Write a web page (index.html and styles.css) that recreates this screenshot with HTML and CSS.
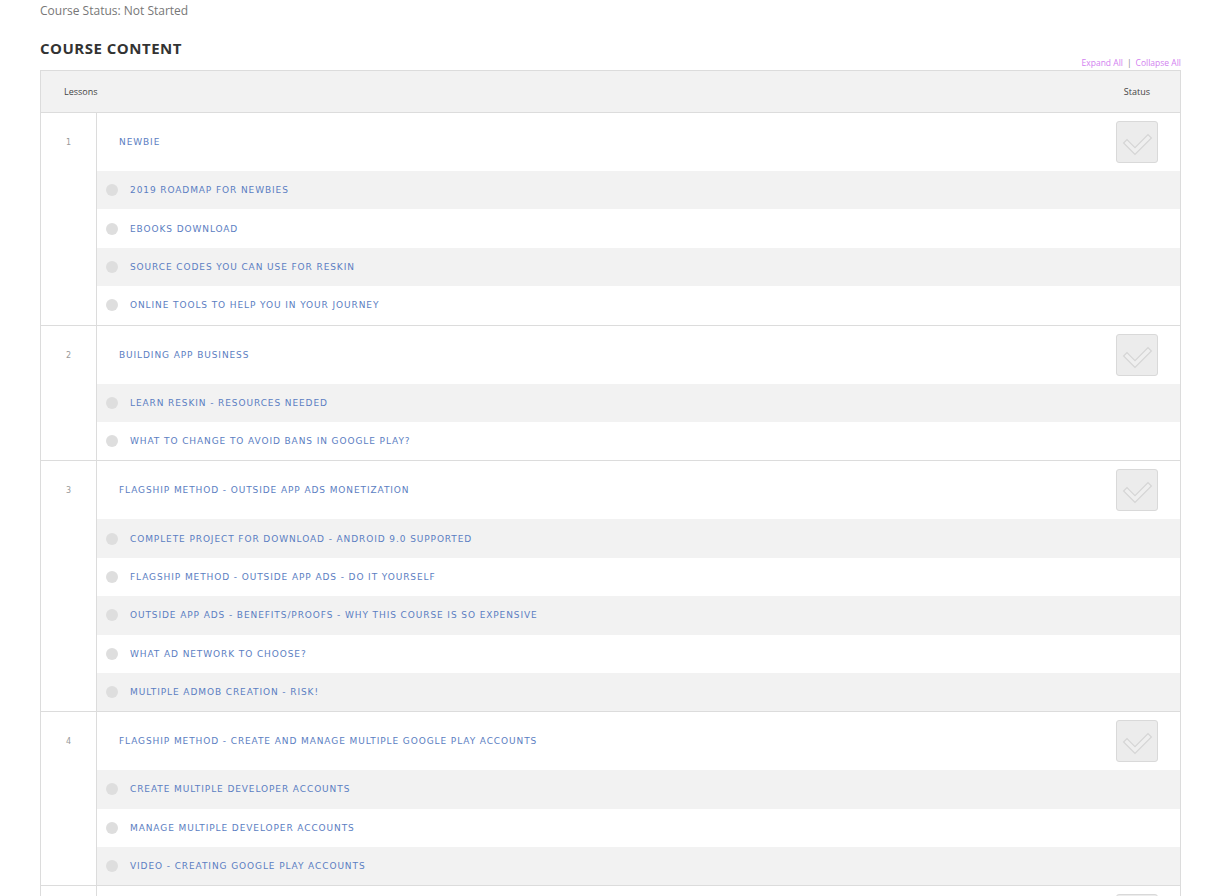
FILE: index.html
```html
<!DOCTYPE html>
<html lang="en">
<head>
<meta charset="utf-8">
<title>Course Content</title>
<link rel="stylesheet" href="styles.css">
</head>
<body>
<div class="page">
  <p class="course-status">Course Status: Not Started</p>
  <h2 class="section-title">COURSE CONTENT</h2>
  <div class="toggles"><a href="#">Expand All</a><span class="sep">|</span><a href="#">Collapse All</a></div>

  <div class="lessons">
    <div class="lessons-head">
      <span class="head-lessons">Lessons</span>
      <span class="head-status">Status</span>
    </div>

    <div class="lesson">
      <div class="lesson-num">1</div>
      <div class="lesson-body">
        <div class="lesson-title">
          <a href="#">NEWBIE</a>
          <span class="status-box"><svg viewBox="0 0 42 42" width="42" height="42"><polyline points="11,22 19,30 32,17" class="chk-out"/><polyline points="11,22 19,30 32,17" class="chk-in"/></svg></span>
        </div>
        <div class="topic"><span class="dot"></span><a href="#">2019 ROADMAP FOR NEWBIES</a></div>
        <div class="topic"><span class="dot"></span><a href="#">EBOOKS DOWNLOAD</a></div>
        <div class="topic"><span class="dot"></span><a href="#">SOURCE CODES YOU CAN USE FOR RESKIN</a></div>
        <div class="topic"><span class="dot"></span><a href="#">ONLINE TOOLS TO HELP YOU IN YOUR JOURNEY</a></div>
      </div>
    </div>

    <div class="lesson">
      <div class="lesson-num">2</div>
      <div class="lesson-body">
        <div class="lesson-title">
          <a href="#">BUILDING APP BUSINESS</a>
          <span class="status-box"><svg viewBox="0 0 42 42" width="42" height="42"><polyline points="11,22 19,30 32,17" class="chk-out"/><polyline points="11,22 19,30 32,17" class="chk-in"/></svg></span>
        </div>
        <div class="topic"><span class="dot"></span><a href="#">LEARN RESKIN - RESOURCES NEEDED</a></div>
        <div class="topic"><span class="dot"></span><a href="#">WHAT TO CHANGE TO AVOID BANS IN GOOGLE PLAY?</a></div>
      </div>
    </div>

    <div class="lesson">
      <div class="lesson-num">3</div>
      <div class="lesson-body">
        <div class="lesson-title">
          <a href="#">FLAGSHIP METHOD - OUTSIDE APP ADS MONETIZATION</a>
          <span class="status-box"><svg viewBox="0 0 42 42" width="42" height="42"><polyline points="11,22 19,30 32,17" class="chk-out"/><polyline points="11,22 19,30 32,17" class="chk-in"/></svg></span>
        </div>
        <div class="topic"><span class="dot"></span><a href="#">COMPLETE PROJECT FOR DOWNLOAD - ANDROID 9.0 SUPPORTED</a></div>
        <div class="topic"><span class="dot"></span><a href="#">FLAGSHIP METHOD - OUTSIDE APP ADS - DO IT YOURSELF</a></div>
        <div class="topic"><span class="dot"></span><a href="#">OUTSIDE APP ADS - BENEFITS/PROOFS - WHY THIS COURSE IS SO EXPENSIVE</a></div>
        <div class="topic"><span class="dot"></span><a href="#">WHAT AD NETWORK TO CHOOSE?</a></div>
        <div class="topic"><span class="dot"></span><a href="#">MULTIPLE ADMOB CREATION - RISK!</a></div>
      </div>
    </div>

    <div class="lesson">
      <div class="lesson-num">4</div>
      <div class="lesson-body">
        <div class="lesson-title">
          <a href="#">FLAGSHIP METHOD - CREATE AND MANAGE MULTIPLE GOOGLE PLAY ACCOUNTS</a>
          <span class="status-box"><svg viewBox="0 0 42 42" width="42" height="42"><polyline points="11,22 19,30 32,17" class="chk-out"/><polyline points="11,22 19,30 32,17" class="chk-in"/></svg></span>
        </div>
        <div class="topic"><span class="dot"></span><a href="#">CREATE MULTIPLE DEVELOPER ACCOUNTS</a></div>
        <div class="topic"><span class="dot"></span><a href="#">MANAGE MULTIPLE DEVELOPER ACCOUNTS</a></div>
        <div class="topic"><span class="dot"></span><a href="#">VIDEO - CREATING GOOGLE PLAY ACCOUNTS</a></div>
      </div>
    </div>

    <div class="lesson">
      <div class="lesson-num">5</div>
      <div class="lesson-body">
        <div class="lesson-title">
          <a href="#">FLAGSHIP METHOD - PUBLISHING YOUR APPS</a>
          <span class="status-box"><svg viewBox="0 0 42 42" width="42" height="42"><polyline points="11,22 19,30 32,17" class="chk-out"/><polyline points="11,22 19,30 32,17" class="chk-in"/></svg></span>
        </div>
      </div>
    </div>
  </div>
</div>
</body>
</html>
```

FILE: styles.css
```css
html, body {
  margin: 0;
  padding: 0;
  background: #fff;
}

.page {
  width: 1141px;
  margin-left: 40px;
  font-family: "Open Sans", "Liberation Sans", sans-serif;
}

.course-status {
  margin: 0;
  padding-top: 3px;
  font-size: 12px;
  line-height: 16px;
  color: #777;
}

.section-title {
  margin: 18px 0 0;
  font-size: 15px;
  line-height: 22px;
  font-weight: 700;
  letter-spacing: 0.5px;
  color: #333;
}

.toggles {
  display: flex;
  justify-content: flex-end;
  align-items: center;
  gap: 4px;
  height: 14px;
  margin-top: -3px;
  font-size: 8.5px;
  line-height: 14px;
}

.toggles a {
  color: #d27ff0;
  text-decoration: none;
}

.toggles .sep {
  color: #888;
}

.lessons {
  border: 1px solid #dcdcdc;
  border-bottom: none;
}

.lessons-head {
  display: flex;
  justify-content: space-between;
  align-items: center;
  height: 41px;
  background: #f2f2f2;
  border-bottom: 1px solid #dcdcdc;
  font-size: 9px;
  color: #444;
}

.head-lessons {
  padding-left: 23px;
}

.head-status {
  padding-right: 30px;
}

.lesson {
  display: grid;
  grid-template-columns: 56px 1fr;
  border-bottom: 1px solid #dcdcdc;
}

.lesson-num {
  border-right: 1px solid #dcdcdc;
  padding-top: 24px;
  padding-left: 25px;
  font-family: "DejaVu Sans", Verdana, sans-serif;
  font-size: 8px;
  line-height: 12px;
  color: #999;
}

.lesson-body a {
  font-family: "DejaVu Sans", Verdana, sans-serif;
  font-size: 9px;
  letter-spacing: 0.9px;
  color: #5b7ec2;
  text-decoration: none;
}

.lesson-title {
  display: flex;
  justify-content: space-between;
  align-items: center;
  height: 58px;
  padding: 0 22px 0 22px;
  background: #fff;
}

.status-box {
  width: 40px;
  height: 40px;
  border: 1px solid #d9d9d9;
  border-radius: 3px;
  background: #ececec;
  display: flex;
}

.status-box svg {
  margin: -1px;
}

/* hollow tick: a wide grey stroke with a narrower fill-coloured one on top */
.chk-out {
  fill: none;
  stroke: #d5d5d5;
  stroke-width: 6;
  stroke-linecap: square;
  stroke-linejoin: miter;
}

.chk-in {
  fill: none;
  stroke: #efefef;
  stroke-width: 3.6;
  stroke-linecap: square;
  stroke-linejoin: miter;
}

.topic {
  display: flex;
  align-items: center;
  gap: 12px;
  height: 38.4px;
  padding-left: 9px;
}

.topic:nth-child(even) {
  background: #f2f2f2;
}

.topic:nth-child(odd) {
  background: #fff;
}

.dot {
  width: 12px;
  height: 12px;
  border-radius: 50%;
  background: #dedede;
  flex: none;
}
```
